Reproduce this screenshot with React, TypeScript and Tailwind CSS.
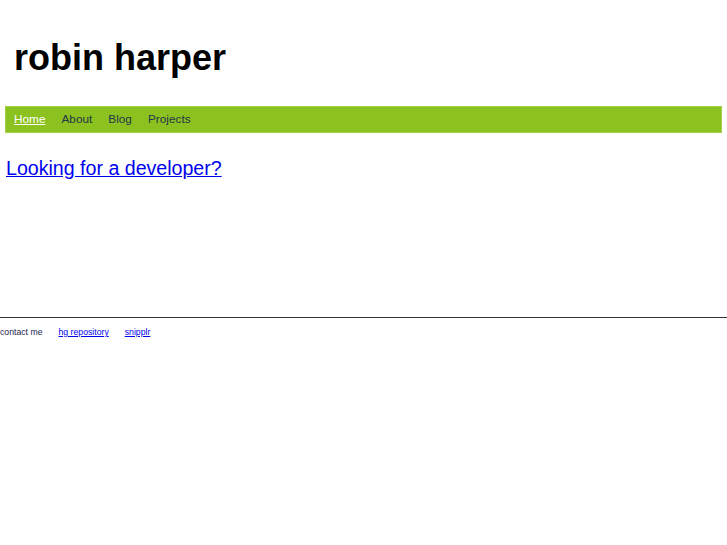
const navLinks = ["Home", "About", "Blog", "Projects"];

const App = () => {
  return (
    <div className="min-h-[545px] bg-white font-['Liberation_Sans',Arial,sans-serif] text-black">
      <div className="px-[5px]">
        {/* Site title */}
        <h1 className="pl-[9px] pt-[40px] text-[36px] font-bold leading-none">
          robin harper
        </h1>

        {/* Nav bar */}
        <nav className="mt-[30px] flex h-[27px] items-center gap-[16px] border border-[#a4d048] bg-[#8cc21f] pl-[8px] text-[11.8px] leading-none text-[#25354a]">
          {navLinks.map((link, i) => (
            <a
              key={link}
              href="#"
              className={i === 0 ? "text-white underline" : "text-[#25354a]"}
            >
              {link}
            </a>
          ))}
        </nav>

        {/* Content */}
        <div className="mt-[25px] pl-[1px]">
          <a href="#" className="text-[19.6px] leading-none text-[#0000ee] underline">
            Looking for a developer?
          </a>
        </div>
      </div>

      {/* Footer */}
      <footer className="mt-[135px] border-t border-[#333] pt-[10px]">
        <div className="flex gap-[16px] text-[8.7px] leading-none">
          <span className="text-[#1c2350]">contact me</span>
          <a href="#" className="text-[#0000ee] underline">
            hg repository
          </a>
          <a href="#" className="text-[#0000ee] underline">
            snipplr
          </a>
        </div>
      </footer>
    </div>
  );
};

export default App;
